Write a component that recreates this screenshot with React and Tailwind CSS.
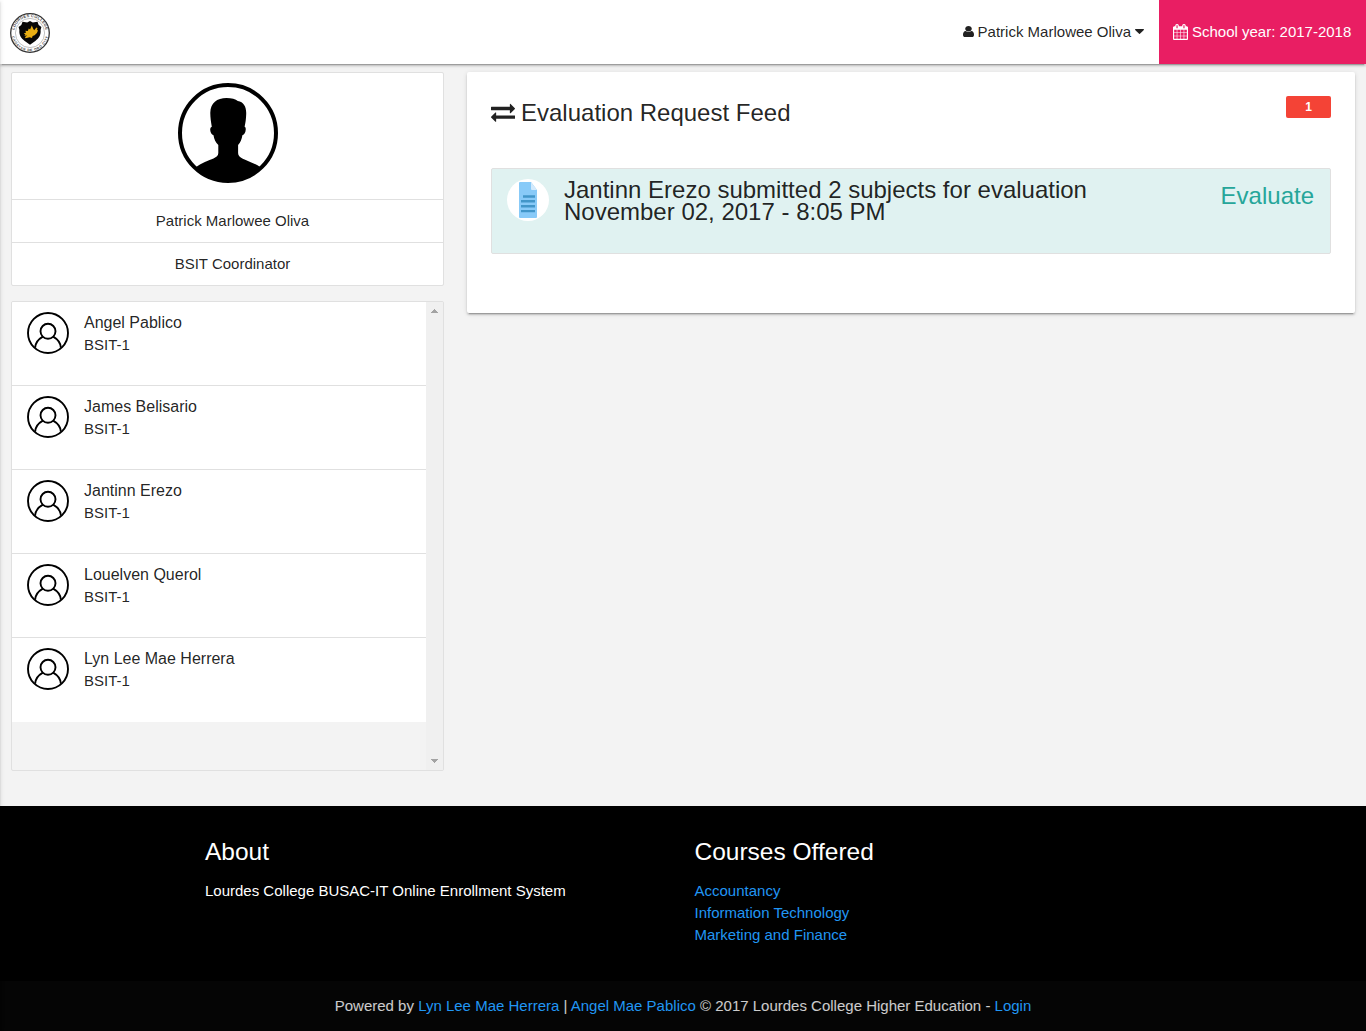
import React from "react";

const paths = {
  user: "M1536 1399q0 109-62.5 187t-150.5 78h-854q-88 0-150.5-78t-62.5-187q0-85 8.5-160.5t31.5-152 58.5-131 94-89 134.5-34.5q131 128 313 128t313-128q76 0 134.500 34.500t94 89 58.500 131 31.500 152 8.500 160.500zm-256-887q0 159-112.500 271.500t-271.500 112.500-271.500-112.500-112.500-271.500 112.500-271.500 271.500-112.500 271.500 112.500 112.500 271.500z",
  caret: "M1408 704q0 26-19 45l-448 448q-19 19-45 19t-45-19l-448-448q-19-19-19-45t19-45 45-19h896q26 0 45 19t19 45z",
  exchange: "M1792 1184v192q0 13-9.5 22.5t-22.5 9.5h-1376v192q0 13-9.5 22.5t-22.5 9.5q-12 0-24-10l-319-320q-9-9-9-22 0-14 9-23l320-320q9-9 23-9 13 0 22.5 9.5t9.5 22.5v192h1376q13 0 22.5 9.5t9.5 22.5zm0-544q0 14-9 23l-320 320q-9 9-23 9-13 0-22.5-9.5t-9.5-22.5v-192h-1376q-13 0-22.5-9.5t-9.5-22.5v-192q0-13 9.5-22.5t22.5-9.5h1376v-192q0-14 9-23t23-9q12 0 24 10l319 319q9 9 9 23z",
  calendar: "M192 1664h288v-288h-288v288zm352 0h320v-288h-320v288zm-352-352h288v-320h-288v320zm352 0h320v-320h-320v320zm-352-384h288v-288h-288v288zm736 736h320v-288h-320v288zm-384-736h320v-288h-320v288zm768 736h288v-288h-288v288zm-384-352h320v-320h-320v320zm-352-864v-288q0-13-9.5-22.5t-22.5-9.5h-64q-13 0-22.5 9.5t-9.5 22.5v288q0 13 9.5 22.5t22.5 9.5h64q13 0 22.5-9.5t9.5-22.5zm736 864h288v-320h-288v320zm-384-384h320v-288h-320v288zm384 0h288v-288h-288v288zm32-480v-288q0-13-9.5-22.5t-22.5-9.5h-64q-13 0-22.5 9.5t-9.5 22.5v288q0 13 9.5 22.5t22.5 9.5h64q13 0 22.5-9.5t9.5-22.5zm384-64v1280q0 52-38 90t-90 38h-1408q-52 0-90-38t-38-90v-1280q0-52 38-90t90-38h128v-96q0-66 47-113t113-47h64q66 0 113 47t47 113v96h384v-96q0-66 47-113t113-47h64q66 0 113 47t47 113v96h128q52 0 90 38t38 90z",
};

function Icon({ name, box = "0 0 1792 1792", className }) {
  return (
    <svg viewBox={box} fill="currentColor" preserveAspectRatio="none" className={className}>
      <path d={paths[name]} />
    </svg>
  );
}

function Logo() {
  return (
    <svg viewBox="0 0 40 40" className="mt-[2px] ml-[10px] size-10">
      <defs>
        <path id="ring-top" d="M4 20a16 16 0 0 1 32 0" />
        <path id="ring-bottom" d="M1.700 20a18.300 18.300 0 0 0 36.600 0" />
      </defs>
      <circle cx="20" cy="20" r="19.300" fill="#fff" stroke="#333" strokeWidth="1.300" />
      <circle cx="20" cy="20" r="14.600" fill="#fff" stroke="#999" strokeWidth=".6" />
      <g fill="#444" fontFamily="Liberation Sans, sans-serif" fontWeight="700">
        <text fontSize="4"><textPath href="#ring-top" startOffset="50%" textAnchor="middle" textLength="44">LOURDES COLLEGE</textPath></text>
        <text fontSize="3.400"><textPath href="#ring-bottom" startOffset="50%" textAnchor="middle" textLength="50">CAGAYAN DE ORO CITY</textPath></text>
      </g>
      <path d="M20 8l2.800 1.400 4.700-.6 1.200 3.300 2.700 2-.8 3c.5 4.500-1.500 8.300-5.300 10.900L20 31.700l-5.300-3.700c-3.800-2.600-5.800-6.400-5.300-10.900l-.8-3 2.700-2 1.200-3.300 4.700.6z" fill="#080808" />
      <path d="M21.800 12.500l1.500 3.600.9 1.100 2.200-2.800 1 .5-.3 2 .9.500-1.100 2.600-2.300 2.300-2 .8-.6 2-2.300-.8-4.200 1-.5-1.200 2.300-1.500-3 .2 1.100-1.300-1.600-.9 2.300-1-.8-1.800 2.500.3 1-2.700 1.300 1z" fill="#e8ae13" />
    </svg>
  );
}

function CoordinatorAvatar() {
  return (
    <svg viewBox="0 0 100 100" className="size-[100px]">
      <circle cx="50" cy="50" r="48" fill="#fff" stroke="#000" strokeWidth="4" />
      <path d="M17.500 84.500C23 80 31 77.500 35.500 75.500c3-1.500 4.800-3 4.800-5.500v-8c-2.500-2.500-4.300-6-4.800-9.800-2-.3-3.200-3-3.300-5.400 0-1.600.5-2.800 1.600-3.100C33 39 32.200 34 32.300 29.500 32.500 20 39 15 48.500 15c5 0 9.200 1 11.300 3 6 1 8.700 6 8.400 13-.1 4.500-.7 9-1.600 12.700.9.300 1.300 1.500 1.100 3.100-.2 2.600-1.300 5.100-3.300 5.400-.6 4-2 7.300-4.300 9.800v8c0 2.500 1.600 4.200 4.700 5.700 5 2.300 12.500 4.800 18 8.800-8 9-19.500 14.500-32.800 14.500S25.500 93.500 17.500 84.500z" fill="#000" />
    </svg>
  );
}

function StudentAvatar() {
  return (
    <svg viewBox="0 0 42 42" fill="none" stroke="#000" strokeWidth="1.900" className="size-[42px] shrink-0">
      <circle cx="21" cy="21" r="20" />
      <circle cx="21" cy="19.300" r="7.500" />
      <path d="M8.100 35.800c.3-5 3.300-8.700 7.800-11.200M33.900 35.800c-.3-5-3.300-8.700-7.800-11.200" />
    </svg>
  );
}

function DocumentIcon() {
  return (
    <span className="flex size-[42px] shrink-0 items-center justify-center rounded-full bg-white">
      <svg viewBox="0 0 18 36" className="h-9 w-[18px]">
        <path d="M1 0h11l6 8v27a1 1 0 0 1-1 1H1a1 1 0 0 1-1-1V1a1 1 0 0 1 1-1z" fill="#88caf8" />
        <path d="M12 0l6 8h-5a1 1 0 0 1-1-1z" fill="#d3eafc" />
        <path d="M4 14.500h12M2 19.300h14M2 24.300h14M2 29.100h14" stroke="#4296c9" strokeWidth="2.400" />
      </svg>
    </span>
  );
}

const students = ["Angel Pablico", "James Belisario", "Jantinn Erezo", "Louelven Querol", "Lyn Lee Mae Herrera"];

export default function App() {
  return (
    <div className="relative flex h-[1031px] w-[1366px] flex-col overflow-hidden bg-[#f3f3f3] font-['Liberation_Sans',Arial,sans-serif] text-[15px] leading-[22px] text-black/87">
      <header className="relative flex h-16 shrink-0 items-center bg-white shadow-[0_2px_2px_0_rgba(0,0,0,0.14),0_1px_5px_0_rgba(0,0,0,0.12),0_3px_1px_-2px_rgba(0,0,0,0.2)]">
        <Logo />
        <div className="ml-auto flex h-16 items-center pr-[15px]">
          <Icon name="user" box="256 128 1280 1536" className="mr-1 mb-px h-[11px] w-[11px]" />
          <span>Patrick Marlowee Oliva</span>
          <Icon name="caret" box="384 640 1024 576" className="mb-px ml-1 h-[5px] w-[9px]" />
        </div>
        <div className="flex h-16 w-[207px] items-center bg-[#e91e63] pl-[14px] text-white">
          <Icon name="calendar" box="64 0 1664 1792" className="mr-1 h-[16px] w-[15px]" />
          <span>School year: 2017-2018</span>
        </div>
      </header>

      <main className="flex h-[742px] shrink-0">
        <aside className="ml-[11px] w-[433px]">
          <section className="mt-2 h-[214px] rounded-xs border border-[#e0e0e0] bg-white">
            <div className="flex h-[127px] justify-center border-b border-[#e0e0e0] pt-[10px]">
              <CoordinatorAvatar />
            </div>
            <div className="h-[43px] border-b border-[#e0e0e0] pt-[10px] pl-[10px] text-center">Patrick Marlowee Oliva</div>
            <div className="h-[42px] pt-[10px] pl-[10px] text-center">BSIT Coordinator</div>
          </section>
          <section className="mt-[15px] flex h-[470px] overflow-hidden rounded-xs border border-[#e0e0e0]">
            <ul className="w-[414px]">
              {students.map((name) => (
                <li key={name} className="flex h-[84px] border-b border-[#e0e0e0] bg-white pt-[10px] pl-[15px] last:border-white">
                  <StudentAvatar />
                  <div className="ml-[15px]">
                    <div className="text-[16px]">{name}</div>
                    <div>BSIT-1</div>
                  </div>
                </li>
              ))}
            </ul>
            <div className="flex w-[17px] flex-col items-center justify-between bg-[#f0f0f0] pt-[7px] pb-[7px] text-[#a3a3a3]">
              <svg viewBox="0 0 7 4" className="h-1 w-[7px]" fill="currentColor" shapeRendering="crispEdges"><path d="M3 0h1v1h1v1h1v1h1v1H0V3h1V2h1V1h1z" /></svg>
              <svg viewBox="0 0 7 4" className="h-1 w-[7px]" fill="currentColor" shapeRendering="crispEdges"><path d="M0 0h7v1H6v1H5v1H4v1H3V3H2V2H1V1H0z" /></svg>
            </div>
          </section>
        </aside>

        <section className="mt-2 ml-[23px] h-[241px] w-[888px] rounded-xs bg-white px-6 shadow-[0_2px_2px_0_rgba(0,0,0,0.14),0_1px_5px_0_rgba(0,0,0,0.12),0_3px_1px_-2px_rgba(0,0,0,0.2)]">
          <div className="flex h-24 justify-between pt-6">
            <h1 className="flex h-[34px] items-center text-[24px]">
              <Icon name="exchange" className="mr-[6px] mb-[2px] size-6" />
              Evaluation Request Feed
            </h1>
            <span className="h-[22px] w-[45px] rounded-xs bg-[#f44336] text-center text-[12px] font-bold text-white">1</span>
          </div>
          <article className="flex h-[86px] rounded-xs border border-[#e0e0e0] bg-[#e0f2f1] pt-[10px] pr-4 pl-[15px]">
            <DocumentIcon />
            <div className="ml-[15px] text-[24px]">
              <p>Jantinn Erezo submitted 2 subjects for evaluation</p>
              <p>November 02, 2017 - 8:05 PM</p>
            </div>
            <a className="mt-[6px] ml-auto text-[24px] text-[#26a69a]">Evaluate</a>
          </article>
        </section>
      </main>

      <footer className="flex h-[225px] flex-col bg-black text-white">
        <div className="flex h-[175px] pt-[33px] pl-[205px]">
          <div className="w-[489.500px]">
            <h2 className="text-[24.500px] leading-[26px]">About</h2>
            <p className="mt-[15px]">Lourdes College BUSAC-IT Online Enrollment System</p>
          </div>
          <div>
            <h2 className="text-[24.500px] leading-[26px]">Courses Offered</h2>
            <ul className="mt-[15px] text-[#2196f3]">
              <li>Accountancy</li>
              <li>Information Technology</li>
              <li>Marketing and Finance</li>
            </ul>
          </div>
        </div>
        <div className="h-[50px] bg-[#050505] pt-[14px] text-center text-white/80">
          Powered by <a className="text-[#2196f3]">Lyn Lee Mae Herrera</a> | <a className="text-[#2196f3]">Angel Mae Pablico</a> © 2017 Lourdes College Higher Education - <a className="text-[#2196f3]">Login</a>
        </div>
      </footer>
      <div className="absolute inset-y-0 -left-2 w-2 shadow-[0_2px_2px_0_rgba(0,0,0,0.14),0_1px_5px_0_rgba(0,0,0,0.12)]" />
    </div>
  );
}
